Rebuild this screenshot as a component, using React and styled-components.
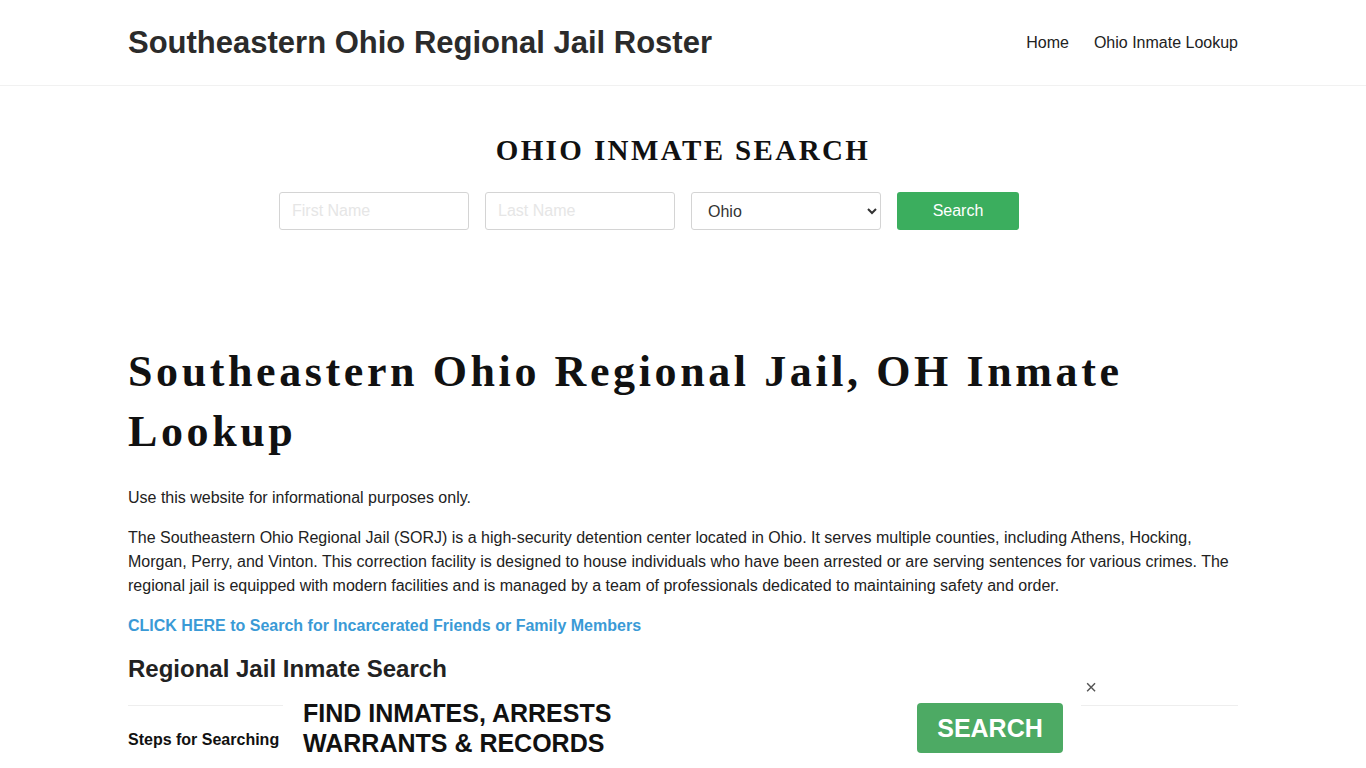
import React from "react";
import styled, { createGlobalStyle } from "styled-components";

const GlobalStyle = createGlobalStyle`
  * { box-sizing: border-box; }
  body {
    margin: 0;
    font-family: "Liberation Sans", Arial, sans-serif;
    color: #222;
    background: #fff;
  }
`;

const Header = styled.header`
  height: 86px;
  border-bottom: 1px solid #f1f1f1;
`;

const Container = styled.div`
  width: 1110px;
  margin: 0 auto;
`;

const HeaderInner = styled(Container)`
  height: 100%;
  display: flex;
  align-items: center;
  justify-content: space-between;
`;

const Brand = styled.a`
  font-size: 31px;
  font-weight: 700;
  color: #2b2b2b;
  text-decoration: none;
  margin-top: 1px;
`;

const Nav = styled.nav`
  display: flex;
  gap: 25px;
  a {
    font-size: 16px;
    color: #222;
    text-decoration: none;
  }
`;

const SearchSection = styled.section`
  padding: 48px 0 0;
  text-align: center;
`;

const SearchTitle = styled.h2`
  margin: 0 0 25px;
  font-family: "Liberation Serif", "Times New Roman", serif;
  font-size: 29px;
  font-weight: 700;
  letter-spacing: 2.4px;
  color: #111;
`;

const SearchForm = styled.form`
  display: flex;
  justify-content: center;
  gap: 16px;
  padding-right: 68px;
`;

const Field = styled.input`
  width: 190px;
  height: 38px;
  padding: 0 12px;
  border: 1px solid #d4d4d4;
  border-radius: 3px;
  font-family: inherit;
  font-size: 16px;
  &::placeholder { color: #e6e6e6; }
`;

const Select = styled.select`
  width: 190px;
  height: 38px;
  padding: 0 12px;
  border: 1px solid #d4d4d4;
  border-radius: 3px;
  background: #fff;
  font-family: inherit;
  font-size: 16px;
  color: #333;
`;

const Button = styled.button`
  width: 122px;
  height: 38px;
  border: none;
  border-radius: 3px;
  background: #3bae5e;
  color: #fff;
  font-family: inherit;
  font-size: 16px;
`;

const Main = styled(Container)`
  padding-top: 112px;
`;

const Title = styled.h1`
  margin: 0 0 24px;
  font-family: "Liberation Serif", "Times New Roman", serif;
  font-size: 44px;
  line-height: 60px;
  font-weight: 700;
  letter-spacing: 3.6px;
  color: #111;
`;

const Text = styled.p`
  margin: 0 0 16px;
  font-size: 16px;
  line-height: 24px;
  color: #222;
`;

const Link = styled.a`
  display: block;
  margin: 0 0 16px;
  font-size: 16px;
  line-height: 24px;
  font-weight: 700;
  color: #3a9ad6;
  text-decoration: none;
`;

const SubTitle = styled.h3`
  margin: 0 0 21px;
  font-size: 24px;
  line-height: 30px;
  font-weight: 700;
  color: #222;
`;

const Rule = styled.hr`
  margin: 0 0 25px;
  border: none;
  border-top: 1px solid #eee;
`;

const Small = styled.h4`
  margin: 0;
  font-size: 16px;
  font-weight: 700;
  color: #111;
`;

const AdBar = styled.div`
  position: fixed;
  left: 283px;
  bottom: 0;
  width: 798px;
  height: 71px;
  background: #fff;
  display: flex;
  align-items: center;
  justify-content: space-between;
  padding: 0 18px 9px 20px;
`;

const AdText = styled.div`
  font-size: 25px;
  line-height: 30px;
  font-weight: 700;
  color: #111;
`;

const AdButton = styled.button`
  width: 146px;
  height: 50px;
  border: none;
  border-radius: 4px;
  background: #4daa64;
  color: #fff;
  font-family: inherit;
  font-size: 25px;
  font-weight: 700;
`;

const Close = styled.button`
  position: absolute;
  top: -20px;
  right: -20px;
  width: 20px;
  height: 20px;
  border: none;
  background: #fff;
  padding: 0;
  color: #555;
  font-family: inherit;
  font-size: 20px;
  line-height: 20px;
`;

export default function App() {
  return (
    <>
      <GlobalStyle />
      <Header>
        <HeaderInner>
          <Brand href="#">Southeastern Ohio Regional Jail Roster</Brand>
          <Nav>
            <a href="#">Home</a>
            <a href="#">Ohio Inmate Lookup</a>
          </Nav>
        </HeaderInner>
      </Header>
      <SearchSection>
        <SearchTitle>OHIO INMATE SEARCH</SearchTitle>
        <SearchForm onSubmit={(e) => e.preventDefault()}>
          <Field placeholder="First Name" />
          <Field placeholder="Last Name" />
          <Select defaultValue="Ohio">
            <option>Ohio</option>
          </Select>
          <Button type="submit">Search</Button>
        </SearchForm>
      </SearchSection>
      <Main>
        <Title>Southeastern Ohio Regional Jail, OH Inmate Lookup</Title>
        <Text>Use this website for informational purposes only.</Text>
        <Text>
          The Southeastern Ohio Regional Jail (SORJ) is a high-security detention center located in Ohio. It
          serves multiple counties, including Athens, Hocking, Morgan, Perry, and Vinton. This correction
          facility is designed to house individuals who have been arrested or are serving sentences for various
          crimes. The regional jail is equipped with modern facilities and is managed by a team of professionals
          dedicated to maintaining safety and order.
        </Text>
        <Link href="#">CLICK HERE to Search for Incarcerated Friends or Family Members</Link>
        <SubTitle>Regional Jail Inmate Search</SubTitle>
        <Rule />
        <Small>Steps for Searching</Small>
      </Main>
      <AdBar>
        <AdText>
          FIND INMATES, ARRESTS
          <br />
          WARRANTS &amp; RECORDS
        </AdText>
        <AdButton>SEARCH</AdButton>
        <Close aria-label="close">×</Close>
      </AdBar>
    </>
  );
}
